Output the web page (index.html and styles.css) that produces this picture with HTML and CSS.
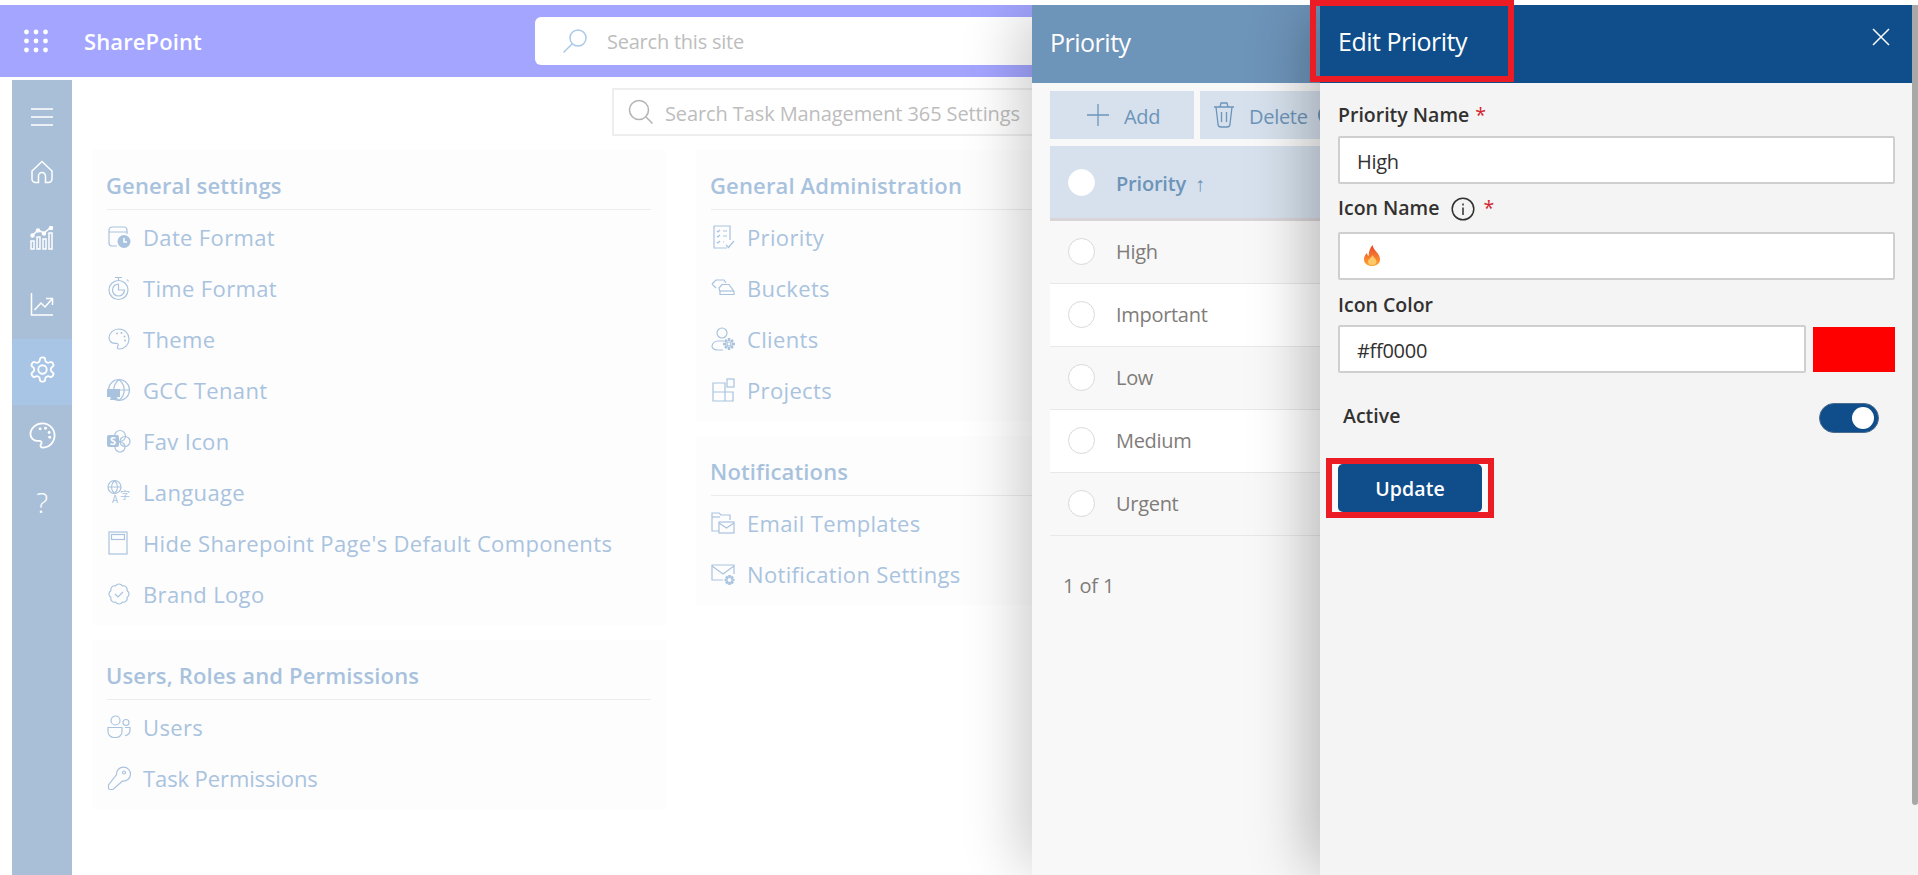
FILE: index.html
```html
<!DOCTYPE html>
<html lang="en">
<head>
<meta charset="utf-8">
<title>Edit Priority</title>
<link rel="stylesheet" href="styles.css">
</head>
<body>
<div class="page">
  <header class="suite">
    <div class="suite-left">
      <svg class="waffle" viewBox="0 0 24 24" width="24" height="24"><g fill="#fff"><circle cx="2.5" cy="3" r="2.4"/><circle cx="12" cy="3" r="2.4"/><circle cx="21.5" cy="3" r="2.4"/><circle cx="2.5" cy="12" r="2.4"/><circle cx="12" cy="12" r="2.4"/><circle cx="21.5" cy="12" r="2.4"/><circle cx="2.5" cy="21" r="2.4"/><circle cx="12" cy="21" r="2.4"/><circle cx="21.5" cy="21" r="2.4"/></g></svg>
      <span class="brand">SharePoint</span>
    </div>
    <div class="site-search">
      <svg class="site-search-icon" viewBox="0 0 26 26" width="26" height="26" fill="none" stroke="#a9c9ea" stroke-width="1.5"><circle cx="16" cy="10" r="8"/><path d="M10 16 1.5 24.5"/></svg>
      <span class="site-search-text">Search this site</span>
    </div>
  </header>
  <div class="workspace">
    <nav class="rail">
      <div class="rail-item rail-menu"><svg class="ri" viewBox="0 0 24 24"><path d="M1 4h22M1 12h22M1 20h22"/></svg></div>
      <div class="rail-item"><svg class="ri" viewBox="0 0 24 24"><path d="M2 11 12 1.5 22 11v8a3.5 3.5 0 0 1-3.5 3.5H15.5V16a3.5 3.5 0 0 0-7 0v6.5H5.500A3.500 3.500 0 0 1 2 19Z"/></svg></div>
      <div class="rail-item"><svg class="ri" viewBox="0 0 24 24"><path d="M1 15h3v8H1zM7 11h3v12H7zM13 13h3v10h-3zM19 7h3v16h-3z"/><path d="M3 9l5-5 6 3 6-5"/><g fill="#fff"><circle cx="2.500" cy="9.500" r="1.500"/><circle cx="8" cy="4.500" r="1.500"/><circle cx="14" cy="7.500" r="1.500"/><circle cx="21" cy="2" r="1.500"/></g></svg></div>
      <div class="rail-item"><svg class="ri" viewBox="0 0 24 24"><path d="M1.500 1v22H23"/><path d="M4.500 18 11 11l4 4 7-8"/><path d="M16 6.500h6.500V13"/></svg></div>
      <div class="rail-item rail-active"><svg class="ri ri-lg" viewBox="0 0 24 24"><path d="M12.220 2h-.44a2 2 0 0 0-2 2v.18a2 2 0 0 1-1 1.730l-.43.25a2 2 0 0 1-2 0l-.15-.08a2 2 0 0 0-2.730.73l-.22.38a2 2 0 0 0 .73 2.730l.15.1a2 2 0 0 1 1 1.720v.51a2 2 0 0 1-1 1.740l-.15.09a2 2 0 0 0-.73 2.730l.22.38a2 2 0 0 0 2.730.73l.15-.08a2 2 0 0 1 2 0l.43.25a2 2 0 0 1 1 1.730V20a2 2 0 0 0 2 2h.44a2 2 0 0 0 2-2v-.18a2 2 0 0 1 1-1.730l.43-.25a2 2 0 0 1 2 0l.15.08a2 2 0 0 0 2.730-.73l.22-.39a2 2 0 0 0-.73-2.730l-.15-.08a2 2 0 0 1-1-1.740v-.5a2 2 0 0 1 1-1.740l.15-.09a2 2 0 0 0 .73-2.730l-.22-.38a2 2 0 0 0-2.730-.73l-.15.08a2 2 0 0 1-2 0l-.43-.25a2 2 0 0 1-1-1.730V4a2 2 0 0 0-2-2z"/><circle cx="12" cy="12" r="3.500"/></svg></div>
      <div class="rail-item"><svg class="ri ri-lg" viewBox="0 0 24 24"><g transform="matrix(-1 0 0 1 24 0)"><path d="M12 2C6.500 2 2 6.500 2 12s4.500 10 10 10c.926 0 1.648-.746 1.648-1.688 0-.437-.18-.835-.437-1.125-.29-.289-.438-.652-.438-1.125a1.640 1.640 0 0 1 1.668-1.668h1.996c3.051 0 5.555-2.503 5.555-5.554C21.965 6.012 17.461 2 12 2z"/></g><g fill="#fff" stroke="none"><circle cx="10" cy="6.500" r="1.200"/><circle cx="14.500" cy="6" r="1.200"/><circle cx="17.500" cy="9.500" r="1.200"/><circle cx="18" cy="13.500" r="1.200"/></g></svg></div>
      <div class="rail-item rail-help">?</div>
    </nav>
    <main class="content">
      <div class="settings-search">
        <svg class="settings-search-icon" viewBox="0 0 26 26" width="26" height="26" fill="none" stroke="#b5b5b5" stroke-width="1.600"><circle cx="11" cy="11" r="9.500"/><path d="M18 18l6.500 6.500"/></svg>
        <span class="settings-search-text">Search Task Management 365 Settings</span>
      </div>
      <div class="columns">
        <div class="col">
          <section class="card">
            <h2 class="card-title">General settings</h2>
            <ul class="list">
              <li class="row"><svg class="ic" viewBox="0 0 24 24"><path d="M20 9V5a3 3 0 0 0-3-3H5a3 3 0 0 0-3 3v13a3 3 0 0 0 3 3h5M2 7h18"/><circle class="fl" cx="17" cy="16.500" r="6.500"/><path class="wh" d="M17 13v4h3"/></svg><span>Date Format</span></li>
              <li class="row"><svg class="ic" viewBox="0 0 24 24"><circle cx="11.500" cy="14" r="9.500"/><path d="M8 1.500h7M11.500 1.500V4.500M20 3.500l1.500 2"/><path d="M11.500 8a6 6 0 1 0 6 6h-6Z"/></svg><span>Time Format</span></li>
              <li class="row"><svg class="ic" viewBox="0 0 24 24"><g transform="matrix(-1 0 0 1 24 0)"><path d="M12 2C6.500 2 2 6.500 2 12s4.500 10 10 10c.926 0 1.648-.746 1.648-1.688 0-.437-.18-.835-.437-1.125-.29-.289-.438-.652-.438-1.125a1.640 1.640 0 0 1 1.668-1.668h1.996c3.051 0 5.555-2.503 5.555-5.554C21.965 6.012 17.461 2 12 2z"/></g><g class="fl"><circle cx="10" cy="6.500" r="1"/><circle cx="14.500" cy="6" r="1"/><circle cx="17.500" cy="9.500" r="1"/><circle cx="18" cy="13.500" r="1"/></g></svg><span>Theme</span></li>
              <li class="row"><svg class="ic" viewBox="0 0 24 24"><circle cx="12" cy="12" r="10.500"/><path d="M1.500 12h21M12 1.500c-7 6-7 15 0 21 7-6 7-15 0-21Z"/><path class="fl" d="M0 11h13v8H0zM4 19h5l1 3H3z"/></svg><span>GCC Tenant</span></li>
              <li class="row"><svg class="ic" viewBox="0 0 24 24"><circle cx="13" cy="7" r="5.500"/><circle cx="18" cy="12.500" r="5"/><circle cx="13" cy="18" r="5"/><rect class="fl" x="0" y="6" width="12" height="12" rx="2"/><text class="ic-s" x="6" y="16">S</text></svg><span>Fav Icon</span></li>
              <li class="row"><svg class="ic" viewBox="0 0 24 24"><circle cx="7.500" cy="7" r="6.500"/><path d="M1 7h13M7.500 .5c-4 4-4 9 0 13 4-4 4-9 0-13Z"/><text class="ic-t" x="5" y="22.500">A</text><text class="ic-t" x="13" y="19">字</text></svg><span>Language</span></li>
              <li class="row"><svg class="ic" viewBox="0 0 24 24"><rect x="2" y="1" width="18" height="22"/><rect x="4.500" y="3.500" width="13" height="5"/></svg><span>Hide Sharepoint Page's Default Components</span></li>
              <li class="row"><svg class="ic" viewBox="0 0 24 24"><path d="M3.850 8.620a4 4 0 0 1 4.780-4.770 4 4 0 0 1 6.740 0 4 4 0 0 1 4.780 4.780 4 4 0 0 1 0 6.740 4 4 0 0 1-4.770 4.780 4 4 0 0 1-6.750 0 4 4 0 0 1-4.780-4.770 4 4 0 0 1 0-6.760Z"/><path d="m8 12 3 3 5-5"/></svg><span>Brand Logo</span></li>
            </ul>
          </section>
          <section class="card">
            <h2 class="card-title">Users, Roles and Permissions</h2>
            <ul class="list">
              <li class="row"><svg class="ic" viewBox="0 0 24 24"><circle cx="8.500" cy="5.500" r="4.500"/><circle cx="19" cy="7.500" r="3"/><path d="M1 12.500h14v4a6 6 0 0 1-6 6H7a6 6 0 0 1-6-6ZM18 12.500h5v3a5 5 0 0 1-5 5"/></svg><span>Users</span></li>
              <li class="row"><svg class="ic" viewBox="0 0 24 24"><path d="M9.500 8.500a7 7 0 1 1 6 6.500L6 23.500H3A1.500 1.500 0 0 1 1.500 22v-3Z"/><circle cx="17" cy="6.500" r="1.500"/></svg><span class="row-tight">Task Permissions</span></li>
            </ul>
          </section>
        </div>
        <div class="col">
          <section class="card">
            <h2 class="card-title">General Administration</h2>
            <ul class="list">
              <li class="row"><svg class="ic" viewBox="0 0 24 24"><path d="M16 23H3V1h16v14"/><path d="M6 6l1 1 2-2M6 11l1 1 2-2M6 17l1 1 2-2M12 6h4M12 11h4M12 17h1M15 20l2.500 2.500L23 16"/></svg><span>Priority</span></li>
              <li class="row"><svg class="ic" viewBox="0 0 24 24"><path d="M1 8 5 4h8l2 3M5 12 1 8M8 12l3-3.500h7l5 7v3H9v-3Z"/><path d="M9 15h14"/></svg><span>Buckets</span></li>
              <li class="row"><svg class="ic" viewBox="0 0 24 24"><circle cx="11" cy="6" r="5"/><path d="M13 14H7a6 6 0 0 0-6 5c0 2 2 4 5 4h6"/><circle cx="18" cy="17" r="2" /><path class="gear" d="M18 11v3M18 20v3M12 17h3M21 17h3M14 13l2 2M20 19l2 2M22 13l-2 2M16 19l-2 2"/></svg><span>Clients</span></li>
              <li class="row"><svg class="ic" viewBox="0 0 24 24"><path d="M2 5h12v18H2zM2 14h20v9h-8M14 14V5"/><rect x="16" y="1" width="7" height="8"/></svg><span>Projects</span></li>
            </ul>
          </section>
          <section class="card">
            <h2 class="card-title">Notifications</h2>
            <ul class="list">
              <li class="row"><svg class="ic" viewBox="0 0 24 24"><path d="M8 20H1V2h7l2 2h9v5"/><path d="M1 6h8"/><rect x="8" y="11" width="15" height="11"/><path d="m8 12 7.500 5 7.500-5"/></svg><span>Email Templates</span></li>
              <li class="row"><svg class="ic" viewBox="0 0 24 24"><path d="M12 18H1V3h22v9"/><path d="m1 4 11 8 11-8"/><circle cx="18.500" cy="18" r="2.500"/><path class="gear" d="M18.500 13v2M18.500 21v2M13.500 18h2M21.500 18h2M15 14.500l1.500 1.500M20.500 20l1.500 1.500M22 14.500 20.500 16M16.500 20 15 21.500"/></svg><span>Notification Settings</span></li>
            </ul>
          </section>
        </div>
      </div>
    </main>
  </div>
</div>

<div class="panels">
  <aside class="panel-list">
    <div class="panel-head"><span>Priority</span></div>
    <div class="panel-list-body">
      <div class="toolbar">
        <button class="tool tool-add"><svg viewBox="0 0 22 22" width="22" height="22" class="tool-ic"><path d="M11 0v22M0 11h22"/></svg><span class="tool-text">Add</span></button>
        <button class="tool tool-del"><svg viewBox="0 0 22 26" width="22" height="26" class="tool-ic"><path d="M1 5h20M3 5l2 17a3 3 0 0 0 3 3h6a3 3 0 0 0 3-3l2-17M7 5l1-4h6l1 4M8.500 10v10M13.500 10v10"/></svg><span class="tool-text">Delete</span><span class="tool-next"></span></button>
      </div>
      <div class="grid-head"><span class="radio radio-head"></span><span class="grid-head-name">Priority</span><span class="sort">↑</span></div>
      <div class="grid-row"><span class="radio"></span><span>High</span></div>
      <div class="grid-row grid-row-alt"><span class="radio"></span><span>Important</span></div>
      <div class="grid-row"><span class="radio"></span><span>Low</span></div>
      <div class="grid-row grid-row-alt"><span class="radio"></span><span>Medium</span></div>
      <div class="grid-row"><span class="radio"></span><span>Urgent</span></div>
      <div class="pager">1 of 1</div>
    </div>
  </aside>
  <aside class="panel-edit">
    <div class="panel-head panel-head-edit"><span>Edit Priority</span>
      <svg class="close" viewBox="0 0 18 18" width="18" height="18"><path d="M1 1l16 16M17 1 1 17"/></svg>
    </div>
    <div class="form">
      <div class="label label-first"><span>Priority Name</span> <span class="req">*</span></div>
      <div class="input">High</div>
      <div class="label label-second"><span>Icon Name</span>
        <svg class="info" viewBox="0 0 24 24" width="24" height="24"><circle cx="12" cy="12" r="10.800"/><path d="M12 10.500V18M12 6.500v2"/></svg>
        <span class="req">*</span></div>
      <div class="input">
        <svg class="flame" viewBox="0 0 16 21" width="16" height="21"><defs><linearGradient id="fg" x1="0" y1="0" x2="0" y2="1"><stop offset="0" stop-color="#e8452c"/><stop offset="1" stop-color="#ffa530"/></linearGradient></defs><path fill="url(#fg)" d="M8.500 0C9 3 11 5 13 7.500c2 2.500 3 4.500 3 7C16 18.500 12.500 21 8 21s-8-2.500-8-6.500C0 11.500 1.500 9.500 3 8c.2 1.500.7 2.500 1.700 3C4.500 7 6 3 8.500 0Z"/><path fill="#ffc869" d="M8.500 10c1 2.500 4 4 4 6.500 0 2.300-2 3.800-4.500 3.800S4 18.800 4 16.500c0-2.500 3.500-3.500 4.500-6.500Z"/></svg>
      </div>
      <div class="label label-third"><span>Icon Color</span></div>
      <div class="color-row">
        <div class="input input-color">#ff0000</div>
        <div class="swatch"></div>
      </div>
      <div class="active-row"><span class="active-label">Active</span><span class="toggle"><span class="thumb"></span></span></div>
      <div class="update-wrap"><button class="update">Update</button><span class="mark mark-update"></span></div>
    </div>
    <div class="scroll-thumb"></div>
  </aside>
</div>
<div class="mark mark-title"></div>
</body>
</html>
```
FILE: styles.css
```css
* { box-sizing: border-box; }
html, body { margin: 0; height: 100%; }
body {
  position: relative;
  height: 875px;
  overflow: hidden;
  background: #fff;
  font-family: "Open Sans", "Noto Sans", sans-serif;
  font-size: 20px;
  letter-spacing: -0.3px;
}
ul { list-style: none; margin: 0; padding: 0; }
h2 { margin: 0; }
button { font: inherit; letter-spacing: inherit; border: 0; }

.page { padding-top: 5px; }

.suite {
  display: flex;
  align-items: center;
  height: 72px;
  background: #a3a5ff;
  color: #fff;
}
.suite-left { display: flex; align-items: center; flex: none; width: 535px; padding-left: 24px; }
.waffle { flex: none; margin-right: 36px; }
.brand { font-size: 22px; font-weight: 600; letter-spacing: 0.1px; }
.site-search {
  display: flex;
  align-items: center;
  width: 640px;
  height: 48px;
  padding-left: 27px;
  background: #fff;
  border-radius: 6px;
  color: #bdbdbd;
}
.site-search-icon { margin-right: 19px; }
.site-search-text { padding-top: 1px; letter-spacing: -0.23px; }

.workspace { display: flex; margin-top: 3px; padding-left: 12px; }
.rail { flex: none; width: 60px; height: 795px; background: #a9bfd7; }
.rail-item { display: flex; align-items: center; justify-content: center; height: 66px; padding-bottom: 5px; color: #fff; }
.rail-menu { height: 61px; padding: 12px 0 0; }
.rail-active { background: #a8c5e5; }
.rail-help { font-size: 28px; font-weight: 300; }
.ri { width: 24px; height: 24px; fill: none; stroke: #fff; stroke-width: 1.500; }
.ri-lg { width: 29px; height: 29px; }

.content { flex: 1; padding-left: 20px; }
.settings-search {
  display: flex;
  align-items: center;
  width: 640px;
  height: 48px;
  margin: 8px 0 0 520px;
  padding-left: 14px;
  border: 2px solid #eeeeee;
  color: #bdbdbd;
}
.settings-search-icon { flex: none; margin-right: 11px; }
.settings-search-text { padding-top: 2px; letter-spacing: -0.1px; }

.columns { display: flex; gap: 30px; margin-top: 14px; }
.col { display: flex; flex-direction: column; gap: 15px; width: 574px; }
.card { padding: 0 15px 4px; background: #fdfdfd; }
.card-title {
  padding: 20px 0 9px;
  font-size: 22px;
  line-height: 30px;
  font-weight: 600;
  letter-spacing: 0.15px;
  text-indent: -1px;
  color: #a8c2dd;
  border-bottom: 1px solid #ececec;
}
.list { margin-top: 3px; }
.row { display: flex; align-items: center; height: 51px; padding-bottom: 4px; font-size: 22px; letter-spacing: 0.35px; color: #a9c3df; }
.row-tight { letter-spacing: -0.1px; }
.ic {
  flex: none;
  width: 24px;
  height: 24px;
  margin-right: 12px;
  overflow: visible;
  fill: none;
  stroke: #a9c3df;
  stroke-width: 1.200;
}
.ic .fl { fill: #a9c3df; stroke: none; }
.ic .wh { stroke: #fff; stroke-width: 1.500; }
.ic .gear { stroke-width: 2.500; }
.ic-s { fill: #fff; stroke: none; font-size: 11px; font-weight: 700; text-anchor: middle; letter-spacing: 0; }
.ic-t { fill: #a9c3df; stroke: none; font-size: 10px; font-family: "Noto Sans CJK SC", sans-serif; letter-spacing: 0; }

/* overlay panels */
.panels {
  position: absolute;
  inset: 5px 0 0 0;
  display: flex;
  justify-content: flex-end;
  overflow: hidden;
  pointer-events: none;
}
.panel-list {
  flex: none;
  width: 288px;
  background: #f8f8f8;
  box-shadow: -18px 0 55px -6px rgba(0, 0, 0, .2);
  overflow: hidden;
}
.panel-edit {
  position: relative;
  flex: none;
  width: 598px;
  background: #f4f4f4;
  box-shadow: -18px 0 55px -6px rgba(0, 0, 0, .26);
}
.panel-head {
  display: flex;
  align-items: center;
  height: 78px;
  padding-left: 18px;
  padding-bottom: 4px;
  background: #6d94b9;
  color: #fff;
  font-size: 25px;
  letter-spacing: -0.5px;
}
.panel-head-edit {
  justify-content: space-between;
  margin-right: 6px;
  padding: 0 22px 6px 18px;
  background: #0f4e8a;
}
.close { margin-bottom: 8px; fill: none; stroke: #fff; stroke-width: 1.500; }
.panel-list-body { padding-left: 18px; color: #7f7c79; }
.toolbar { display: flex; gap: 6px; margin-top: 8px; }
.tool {
  display: flex;
  align-items: center;
  flex: none;
  height: 48px;
  background: #d6e1ed;
  color: #6d94b9;
}
.tool-text { padding-top: 2px; }
.tool-add { width: 144px; padding-left: 37px; }
.tool-add .tool-ic { margin-right: 15px; }
.tool-del { width: 140px; padding-left: 13px; }
.tool-del .tool-ic { margin-right: 14px; }
.tool-ic { flex: none; fill: none; stroke: #6d94b9; stroke-width: 1.300; }
.tool-next { width: 20px; height: 20px; margin-left: 10px; border: 2px solid #6d94b9; border-radius: 50%; flex: none; }
.grid-head {
  display: flex;
  align-items: center;
  height: 75px;
  margin-top: 7px;
  padding-left: 18px;
  background: #d6e1ed;
  border-bottom: 3px solid #d9d4d8;
  color: #6d94b9;
}
.grid-head-name { padding-top: 2px; font-weight: 600; letter-spacing: -0.2px; }
.sort { margin-left: 9px; padding-top: 2px; font-size: 20px; }
.radio {
  flex: none;
  width: 27px;
  height: 27px;
  margin-right: 21px;
  background: #fff;
  border: 1px solid #d9d9d9;
  border-radius: 50%;
}
.radio-head { border-color: #fff; }
.grid-row {
  display: flex;
  align-items: center;
  height: 63px;
  padding: 0 0 1px 18px;
  background: #f8f8f8;
  border-bottom: 1px solid #e8e8e8;
}
.grid-row-alt { background: #fff; }
.pager { margin-top: 35px; padding-left: 13px; line-height: 30px; letter-spacing: -0.1px; }

.form { padding: 0 23px 0 18px; color: #323130; }
.label { display: flex; align-items: flex-start; height: 30px; font-weight: 600; font-size: 19.500px; line-height: 30px; letter-spacing: 0; }
.label-first { margin: 17px 0 6px; }
.label-second { height: 33px; margin: 9px 0 6px; }
.label-third { height: 29px; margin: 10px 0 6px; }
.req { margin-left: 6px; color: #d3232e; font-weight: 400; }
.info { margin: 4px 0 0 12px; fill: none; stroke: #323130; stroke-width: 1.500; }
.label-second .req { margin-left: 8px; }
.input {
  display: flex;
  align-items: center;
  height: 48px;
  padding: 2px 0 0 17px;
  background: #fff;
  border: 2px solid #cfcfcf;
  border-radius: 2px;
}
.flame { margin: 0 0 3px 7px; }
.color-row { display: flex; gap: 7px; }
.input-color { flex: 1; }
.swatch { flex: none; width: 82px; height: 45px; margin-top: 2px; background: #ff0000; }
.active-row {
  display: flex;
  align-items: center;
  justify-content: space-between;
  height: 30px;
  margin-top: 30px;
  padding: 0 16px 0 5px;
}
.active-label { margin-bottom: 5px; font-weight: 600; font-size: 19.500px; letter-spacing: 0; }
.toggle {
  display: flex;
  align-items: center;
  justify-content: flex-end;
  width: 60px;
  height: 30px;
  padding-right: 4px;
  background: #0f4e8a;
  border: 1px solid #4d6d8e;
  border-radius: 15px;
}
.thumb { width: 22px; height: 22px; background: #fff; border-radius: 50%; }
.update-wrap {
  position: relative;
  width: 156px;
  margin: 31px 0 0 -6px;
  padding: 0 6px;
  background: #fafafa;
}
.update {
  display: block;
  width: 144px;
  height: 48px;
  background: #0f4e8a;
  border-radius: 5px;
  color: #fff;
  font-weight: 600;
  font-size: 19.500px;
  letter-spacing: 0.1px;
}
.scroll-thumb {
  position: absolute;
  top: 0;
  right: 0;
  width: 6px;
  height: 800px;
  background: #a8a8a8;
  border-radius: 0 0 3px 3px;
}
.mark { position: absolute; border: 6px solid #ec1c24; }
.mark-update { top: -6px; left: -6px; right: -6px; bottom: -6px; }
.mark-title { top: 0; left: 1310px; width: 204px; height: 82px; }
```
